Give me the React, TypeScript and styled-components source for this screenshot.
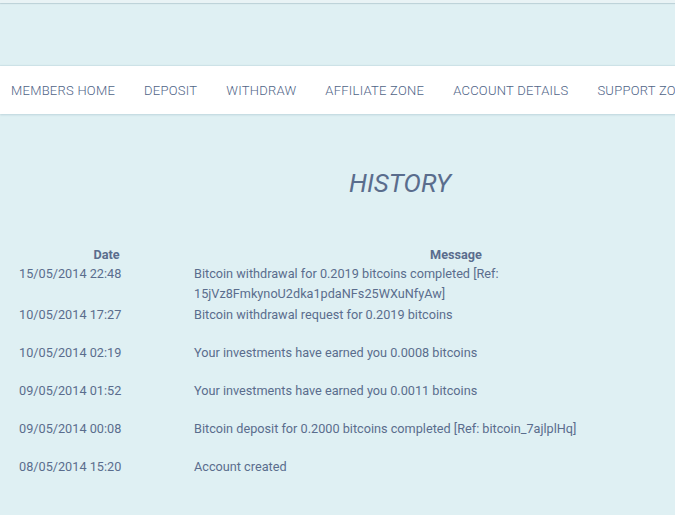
import React, { FunctionComponent } from "react";
import styled, { createGlobalStyle } from "styled-components";

const GlobalStyle = createGlobalStyle`
  html, body {
    margin: 0;
    padding: 0;
    background: #dff0f3;
    overflow: hidden;
  }
  body {
    font-family: Roboto, "Liberation Sans", sans-serif;
    color: #5a6d8d;
  }
`;

interface HistoryEntry {
    date: string;
    message: string[];
}

const entries: HistoryEntry[] = [
    {
        date: "15/05/2014 22:48",
        message: ["Bitcoin withdrawal for 0.2019 bitcoins completed [Ref:", "15jVz8FmkynoU2dka1pdaNFs25WXuNfyAw]"],
    },
    { date: "10/05/2014 17:27", message: ["Bitcoin withdrawal request for 0.2019 bitcoins"] },
    { date: "10/05/2014 02:19", message: ["Your investments have earned you 0.0008 bitcoins"] },
    { date: "09/05/2014 01:52", message: ["Your investments have earned you 0.0011 bitcoins"] },
    { date: "09/05/2014 00:08", message: ["Bitcoin deposit for 0.2000 bitcoins completed [Ref: bitcoin_7ajlplHq]"] },
    { date: "08/05/2014 15:20", message: ["Account created"] },
];

const navItems = ["Members Home", "Deposit", "Withdraw", "Affiliate Zone", "Account Details", "Support Zone"];

const Page = styled.div`
  width: 800px;
  min-height: 515px;
`;

const TopStrip = styled.div`
  height: 3px;
  background: #e9f3f5;
  box-shadow: 0 1px 1px rgba(120, 150, 160, 0.35);
`;

const Header = styled.header`
  height: 63px;
`;

const NavBar = styled.nav`
  display: flex;
  align-items: center;
  gap: 29px;
  height: 48px;
  padding: 0 11px;
  background: #ffffff;
  box-shadow: 0 1px 2px rgba(110, 150, 165, 0.3), 0 -1px 1px rgba(110, 150, 165, 0.12);
  white-space: nowrap;
`;

const NavLink = styled.a`
  font-size: 13px;
  font-weight: 300;
  letter-spacing: 0.25px;
  text-transform: uppercase;
  color: #4f6487;
  text-decoration: none;
  cursor: pointer;
`;

const Main = styled.main`
  padding-top: 54px;
`;

const Title = styled.h1`
  margin: 0 0 48px;
  text-align: center;
  font-size: 26px;
  line-height: 30px;
  font-weight: 400;
  font-style: italic;
`;

const Table = styled.table`
  margin-left: 19px;
  width: 699px;
  border-collapse: collapse;
  font-size: 12.7px;
`;

const HeadCell = styled.th`
  height: 17px;
  padding: 0;
  font-weight: 700;
  line-height: 17px;
  text-align: center;
  vertical-align: top;
`;

const Cell = styled.td<{ $width?: number }>`
  width: ${(p) => (p.$width ? `${p.$width}px` : "auto")};
  height: 37px;
  padding: 1px 0 0;
  line-height: 20px;
  vertical-align: top;
  text-align: left;
`;

const HistoryTable: FunctionComponent = () => (
    <Table>
        <thead>
            <tr>
                <HeadCell>Date</HeadCell>
                <HeadCell>Message</HeadCell>
            </tr>
        </thead>
        <tbody>
            {entries.map((e) => (
                <tr key={e.date + e.message[0]}>
                    <Cell $width={175}>{e.date}</Cell>
                    <Cell>
                        {e.message.map((line, i) => (
                            <React.Fragment key={i}>
                                {i > 0 && <br />}
                                {line}
                            </React.Fragment>
                        ))}
                    </Cell>
                </tr>
            ))}
        </tbody>
    </Table>
);

const App: FunctionComponent = () => (
    <Page>
        <GlobalStyle />
        <TopStrip />
        <Header />
        <NavBar>
            {navItems.map((item) => (
                <NavLink key={item}>{item}</NavLink>
            ))}
        </NavBar>
        <Main>
            <Title>HISTORY</Title>
            <HistoryTable />
        </Main>
    </Page>
);

export default App;
